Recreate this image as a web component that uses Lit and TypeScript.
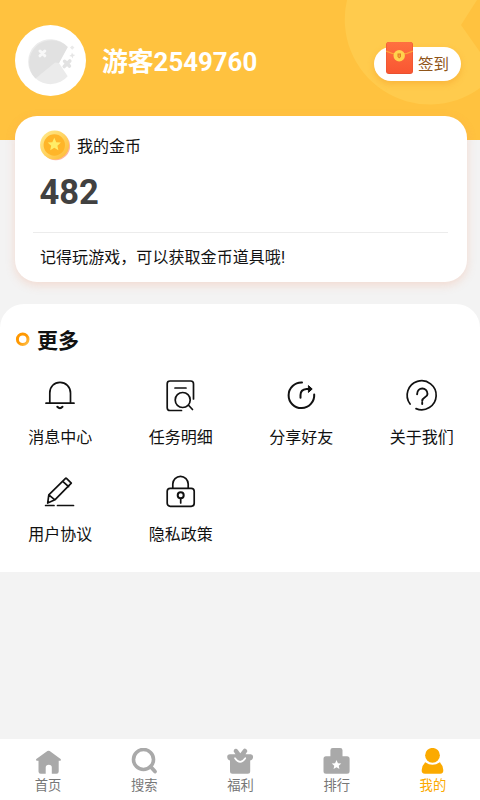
import { LitElement, html, css, svg } from "lit";
import { customElement } from "lit/decorators.js";
import { classMap } from "lit/directives/class-map.js";

const STAR = "M0-1L.29-.36L.97-.3L.46.16L.6.82L0 .48L-.6.82L-.46.16L-.97-.3L-.29-.36Z";

const menu = [
  { label: "消息中心", icon: svg`<path d="M10.8 29V19C10.8 12.5 15.3 8.4 21 8.4S31.5 12.5 31.5 19V29M7 29.2H35"/><path d="M18.3 32.8Q21 35.5 23.5 32.8" stroke-width="2"/>` },
  { label: "任务明细", icon: svg`<path d="M21.5 36.5H10Q7.2 36.5 7.2 33.7V9.8Q7.2 7 10 7H30.7Q33.5 7 33.5 9.8V25M15 14H26M28.8 31.5L32.5 35.5"/><circle cx="22.7" cy="26" r="7.5"/>` },
  { label: "分享好友", icon: svg`<path d="M22 8.5A12.8 12.8 0 1 0 34.2 20.5" stroke-width="2"/><path d="M20.5 23.8V21Q20.5 15.5 26.5 15H30.5" stroke-width="2"/><path d="M28.7 11.8L32.2 15L28.7 18.2Z" fill="#111" stroke-width="1"/>` },
  { label: "关于我们", icon: svg`<path d="M9.1 30A14.5 14.5 0 1 1 15 34.6"/><path d="M16.1 20.2C16.1 12.7 26.5 12.7 26.5 19.9C26.5 23.7 21.2 22.9 21.2 27M21.2 28.6V30" stroke-width="1.9"/>` },
  { label: "用户协议", icon: svg`<path d="M8.7 32L9.8 23.8L26.3 7.6Q27 6.9 27.7 7.6L32.3 12.2L15.9 28.8L8.7 32M9.8 23.8L15.9 28.8M23.7 10.3L29.6 15.6M6.6 34.5H15M18.5 34.5H34.5"/>` },
  { label: "隐私政策", icon: svg`<rect x="7.2" y="17.3" width="27" height="18" rx="3"/><path d="M12.8 17V13A7.7 7.7 0 0 1 28.2 13V17M20.7 27.5V32"/><circle cx="20.7" cy="24.3" r="3" stroke-width="2"/>` },
];

const tabs = [
  { label: "首页", icon: svg`<path d="M14.4 3.1Q15.5 2.3 16.7 3.1L27.6 11.1Q28.4 12.4 27.2 12.8H25.7V23.5Q25.7 25.7 23.5 25.7H18.8V19.5Q18.8 16.8 15.8 16.8T12.7 19.5V25.7H7.7Q5.5 25.7 5.5 23.5V12.8H4Q2.5 12.5 3.3 11.1Z"/>` },
  { label: "搜索", icon: svg`<circle cx="14.5" cy="11.5" r="10" fill="none" stroke="currentColor" stroke-width="3.6"/><path d="M21.5 18.5L26 23.5" stroke="currentColor" stroke-width="3.8" stroke-linecap="round"/>` },
  { label: "福利", icon: svg`<path d="M5 6.2H10.5L8.8 3.8Q8.2 1.5 10.5.8Q11.9.5 12.7 1.8L15.3 5.2L18.2 1.5Q19.5 0 21 1Q23.1 2.4 21.8 4.2L20.5 6.2H25.7Q28.1 6.3 28.1 8.7Q28.1 11.7 25.2 12.5V23.2Q25.2 25.7 22.7 25.7H7.5Q5 25.7 5 23.2V12.5Q2.2 11.7 2.2 8.7Q2.2 6.3 5 6.2Z"/><path d="M10 10.2Q15.1 17.5 20.3 10.2" fill="none" stroke="#fff" stroke-width="1.7" stroke-linecap="round"/>` },
  { label: "排行", icon: svg`<path d="M9.4 8.2V2.3Q9.4 0 11.7 0H19.2Q21.5 0 21.5 2.3V8.2H26Q28.6 8.2 28.6 10.8V23.2Q28.6 25.7 26 25.7H5Q2.5 25.7 2.5 23.2V10.8Q2.5 8.2 5 8.2Z"/><path d="${STAR}" transform="translate(15.5 17) scale(4.9)" fill="#fff"/>` },
  { label: "我的", icon: svg`<circle cx="15.5" cy="7.3" r="7.4"/><path d="M8.3 14.2Q15.5 19.2 22.8 14.2Q25.8 17 26.3 22Q26.6 25.7 23.2 25.7H8Q4.3 25.7 4.7 22Q5.2 17 8.3 14.2Z"/>` },
];

@customElement("app-root")
export class AppRoot extends LitElement {
  static styles = css`
    :host { display: flex; flex-direction: column; height: 800px; width: 480px; overflow: hidden; background: #f3f3f3; color: #111;
      font-family: Roboto, "Noto Sans CJK SC", sans-serif; }
    * { box-sizing: border-box; }
    svg { display: block; flex: none; }
    .header { position: relative; height: 140px; flex: none; background: #ffc23f; display: flex; align-items: flex-start; padding: 25px 19px 0 15px; }
    .watermark { position: absolute; top: 0; right: 0; }
    .avatar { width: 71px; height: 71px; }
    .name { margin-left: 16px; margin-top: 18px; font-size: 25.8px; line-height: 38px; font-weight: 700; color: #fff; white-space: nowrap; }
    .sign { position: relative; width: 87px; height: 34px; margin: 22px 0 0 auto; border-radius: 17px; background: #fff; color: #8f5519; font-size: 15.5px; line-height: 36px; padding-left: 44px; box-shadow: 0 3px 6px #f39b2470; white-space: nowrap; }
    .envelope { position: absolute; left: 12px; top: -6px; }
    .card { position: relative; flex: none; width: 452px; height: 166px; margin: -24px 0 0 15px; border-radius: 22px; background: #fff; box-shadow: 0 3px 10px #f28e6740; padding: 13px 19px 0 18px; }
    .coin { display: flex; align-items: center; gap: 6px; padding-left: 7px; font-size: 16px; height: 32px; }
    .amount { padding-left: 6.5px; margin-top: 9px; font-size: 34.5px; line-height: 44px; font-weight: 700; color: #414141; }
    .note { margin-top: 18px; border-top: 1px solid #ececec; padding: 13px 7px; font-size: 16px; letter-spacing: .06px; line-height: 24px; white-space: nowrap; }
    .more { flex: none; height: 268px; margin-top: 22px; background: #fff; border-radius: 24px 24px 0 0; padding-top: 21px; }
    .title { margin: 0; display: flex; align-items: center; gap: 7px; padding-left: 15px; height: 28px; font-size: 21px; font-weight: 700; }
    .grid { display: grid; grid-template-columns: repeat(4, 1fr); grid-auto-rows: 97px; margin: 21px -2px 0 0; }
    .item { display: flex; flex-direction: column; align-items: center; font-size: 16px; line-height: 24px; gap: 10px; }
    .item svg { fill: none; stroke: #111; stroke-width: 1.7; stroke-linecap: round; stroke-linejoin: round; }
    .tabs { flex: none; margin: auto -1px 0 0; height: 61px; background: #fff; display: grid; grid-template-columns: repeat(5, 1fr); }
    .tab { display: flex; flex-direction: column; align-items: center; padding-top: 9px; color: #a9a9a9; font-size: 13.3px; line-height: 20px; }
    .tab svg { fill: currentColor; }
    .tab span { color: #777; margin-top: 1px; }
    .tab.active, .tab.active span { color: #fbaa00; }
  `;

  render() {
    return html`
      <header class="header">
        <svg class="watermark" width="136" height="106" viewBox="344 0 136 106"><path d="M347 0A85 85 0 0 0 480 88V52L461 25L477 0Z" fill="#ffcb4d"/></svg>
        <svg class="avatar" viewBox="0 0 71 71">
          <circle cx="35.5" cy="35.5" r="35.5" fill="#fff"/>
          <path d="M52.7 22A22.5 22.5 0 1 0 52.7 51.3L44 38Z" fill="#ebebeb"/>
          <path d="M52.7 22A22.5 22.5 0 0 0 20.5 53.5L40 37.5L44 38Z" fill="#e1e1e1"/>
          <path d="M25 26L29.8 30.8M29.8 26L25 30.8" stroke="#f8f8f8" stroke-width="3" stroke-linecap="round"/>
          <path d="M49.6 36.3L54.4 41.1M54.8 35.9L49.2 41.5" stroke="#e2e2e2" stroke-width="3.6" stroke-linecap="round"/>
          <path d="M57 27.5L58 29.5L60.3 30L58.2 31.2L57.8 33.5L56.5 31.5L54.2 31L56.3 29.7Z" fill="#e5e5e5"/>
          <path d="M57.2 20.5L59.4 22.6L57.2 24.7L55 22.6Z" fill="#eaeaea"/>
        </svg>
        <div class="name">游客2549760</div>
        <div class="sign">
          <svg class="envelope" width="27" height="33" viewBox="0 0 27 33">
            <defs><linearGradient id="red" x2="0" y2="1"><stop stop-color="#ff7040"/><stop offset="1" stop-color="#f95632"/></linearGradient></defs>
            <rect y="1" width="27" height="32" rx="3" fill="#e95030"/><rect x=".5" y="1" width="26" height="31" rx="2.5" fill="url(#red)"/>
            <path d="M0 10Q13.5 17 27 10" fill="none" stroke="#ffa33a" stroke-width="1.3"/>
            <circle cx="13.2" cy="14.8" r="5.7" fill="#ffd34d"/><path d="M11.5 12.5H15V15.8L13.2 17.5L11.5 15.8Z" fill="#e67b25"/><path d="M13.2 13.5V16" stroke="#ffd34d" stroke-width=".7"/>
          </svg>签到
        </div>
      </header>
      <section class="card">
        <div class="coin">
          <svg width="31" height="31" viewBox="0 0 31 31">
            <defs><linearGradient id="gold" x2="1" y2="1"><stop stop-color="#ffec91"/><stop offset=".7" stop-color="#ffc94d"/><stop offset="1" stop-color="#ffb735"/></linearGradient></defs>
            <circle cx="15.8" cy="16" r="14.3" fill="#ffb6a0"/><circle cx="14.6" cy="15" r="14.5" fill="url(#gold)"/><circle cx="14.3" cy="15" r="10.7" fill="#ffb529"/>
            <path d="${STAR}" transform="translate(14.3 14.6) scale(6.8)" fill="#ffed68"/>
          </svg><span>我的金币</span>
        </div>
        <div class="amount">482</div>
        <div class="note">记得玩游戏，可以获取金币道具哦!</div>
      </section>
      <section class="more">
        <h2 class="title">
          <svg width="15" height="15" viewBox="0 0 15 15"><defs><linearGradient id="ring" x2="1" y2="1"><stop offset=".5" stop-color="#ff9800"/><stop offset="1" stop-color="#ffc14d"/></linearGradient></defs><circle cx="7.7" cy="7.3" r="5.3" fill="none" stroke="url(#ring)" stroke-width="3"/></svg>
          <span>更多</span>
        </h2>
        <div class="grid">
          ${menu.map((m) => html`<div class="item"><svg width="42" height="42" viewBox="0 0 42 42">${m.icon}</svg><span>${m.label}</span></div>`)}
        </div>
      </section>
      <nav class="tabs">
        ${tabs.map((t) => html`<div class=${classMap({ tab: true, active: t.label === "我的" })}><svg width="31" height="27" viewBox="0 0 31 27">${t.icon}</svg><span>${t.label}</span></div>`)}
      </nav>`;
  }
}
